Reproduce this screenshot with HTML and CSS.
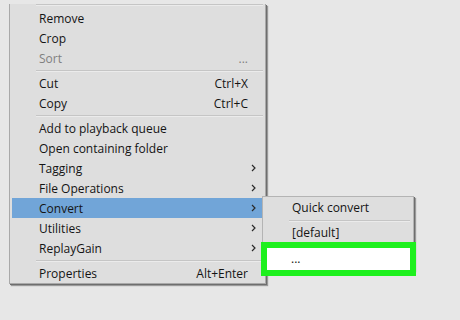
FILE: index.html
```html
<!DOCTYPE html>
<html>
  <head>
  <meta charset="utf-8">
  <title>Context menu</title>
  <link rel="stylesheet" href="styles.css">
  </head>
  <body>

<div class="menu">
  <div class="sep top"></div>
  <div class="item"><span>Remove</span><span></span><span></span></div>
  <div class="item"><span>Crop</span><span></span><span></span></div>
  <div class="item off"><span>Sort</span><span>...</span><span></span></div>
  <div class="sep"></div>
  <div class="item"><span>Cut</span><span>Ctrl+X</span><span></span></div>
  <div class="item"><span>Copy</span><span>Ctrl+C</span><span></span></div>
  <div class="sep"></div>
  <div class="item"><span>Add to playback queue</span><span></span><span></span></div>
  <div class="item"><span>Open containing folder</span><span></span><span></span></div>
  <div class="item"><span>Tagging</span><span></span><span class="arr"><svg width="5" height="8" viewBox="0 0 5 8"><path d="M1 1l3 3-3 3"/></svg></span></div>
  <div class="item"><span>File Operations</span><span></span><span class="arr"><svg width="5" height="8" viewBox="0 0 5 8"><path d="M1 1l3 3-3 3"/></svg></span></div>
  <div class="item hot"><span>Convert</span><span></span><span class="arr"><svg width="5" height="8" viewBox="0 0 5 8"><path d="M1 1l3 3-3 3"/></svg></span></div>
  <div class="item"><span>Utilities</span><span></span><span class="arr"><svg width="5" height="8" viewBox="0 0 5 8"><path d="M1 1l3 3-3 3"/></svg></span></div>
  <div class="item"><span>ReplayGain</span><span></span><span class="arr"><svg width="5" height="8" viewBox="0 0 5 8"><path d="M1 1l3 3-3 3"/></svg></span></div>
  <div class="sep"></div>
  <div class="item"><span>Properties</span><span>Alt+Enter</span><span></span></div>
</div>

<!-- flyout for Convert -->
<div class="submenu">
  <div class="subitem">Quick convert</div>
  <div class="sep sub"></div>
  <div class="subitem">[default]</div>
  <div class="subitem"></div>
</div>

<div class="mark">...</div>

  </body>
</html>
```

FILE: styles.css
```css
body {margin:0; background:#e7e7e7; font: 12px "Open Sans", "Noto Sans", sans-serif; color:#141414; height:320px; overflow:hidden;}
.menu {margin-left:9px; width:255px; background:#dedede; border:1px solid #a9a9a9; border-top:none; box-shadow: 1px 1px 0 #6e6e6e, 2px 2px 1px #9a9a9a;}
.sep {height:0; margin:2px 2px 1px 26px; border-top:1px solid #c5c5c5; border-bottom:1px solid #ebebeb;}
.sep.top {margin-top:4px; margin-bottom:2px;}
.item {display:grid; grid-template-columns: 1fr auto 14px; height:20px; align-items:center; margin:0 3px 0 2px; padding-left:27px;}
.item.off {color:#808080;}
.item.hot {background:#71a5d8;}
.arr {display:flex; align-items:center; padding-left:3px;}
.arr svg path {fill:none; stroke:#2a2a2a; stroke-width:1.2;}
.submenu {position:absolute; left:262px; top:196px; width:150px; padding:1px 0 6px 0; background:#dedede; border:1px solid #b4b4b4; box-shadow: 1px 1px 0 #6e6e6e, 2px 2px 1px #9a9a9a;}
.subitem {height:20px; line-height:20px; padding-left:29px;}
.sep.sub {margin:2px 3px 1px 26px;}
.mark {position:absolute; left:261px; top:242px; width:155px; height:34px; box-sizing:border-box; border:6px solid #1ef01e; background:#fff; padding-left:24px; line-height:21px;}
```
